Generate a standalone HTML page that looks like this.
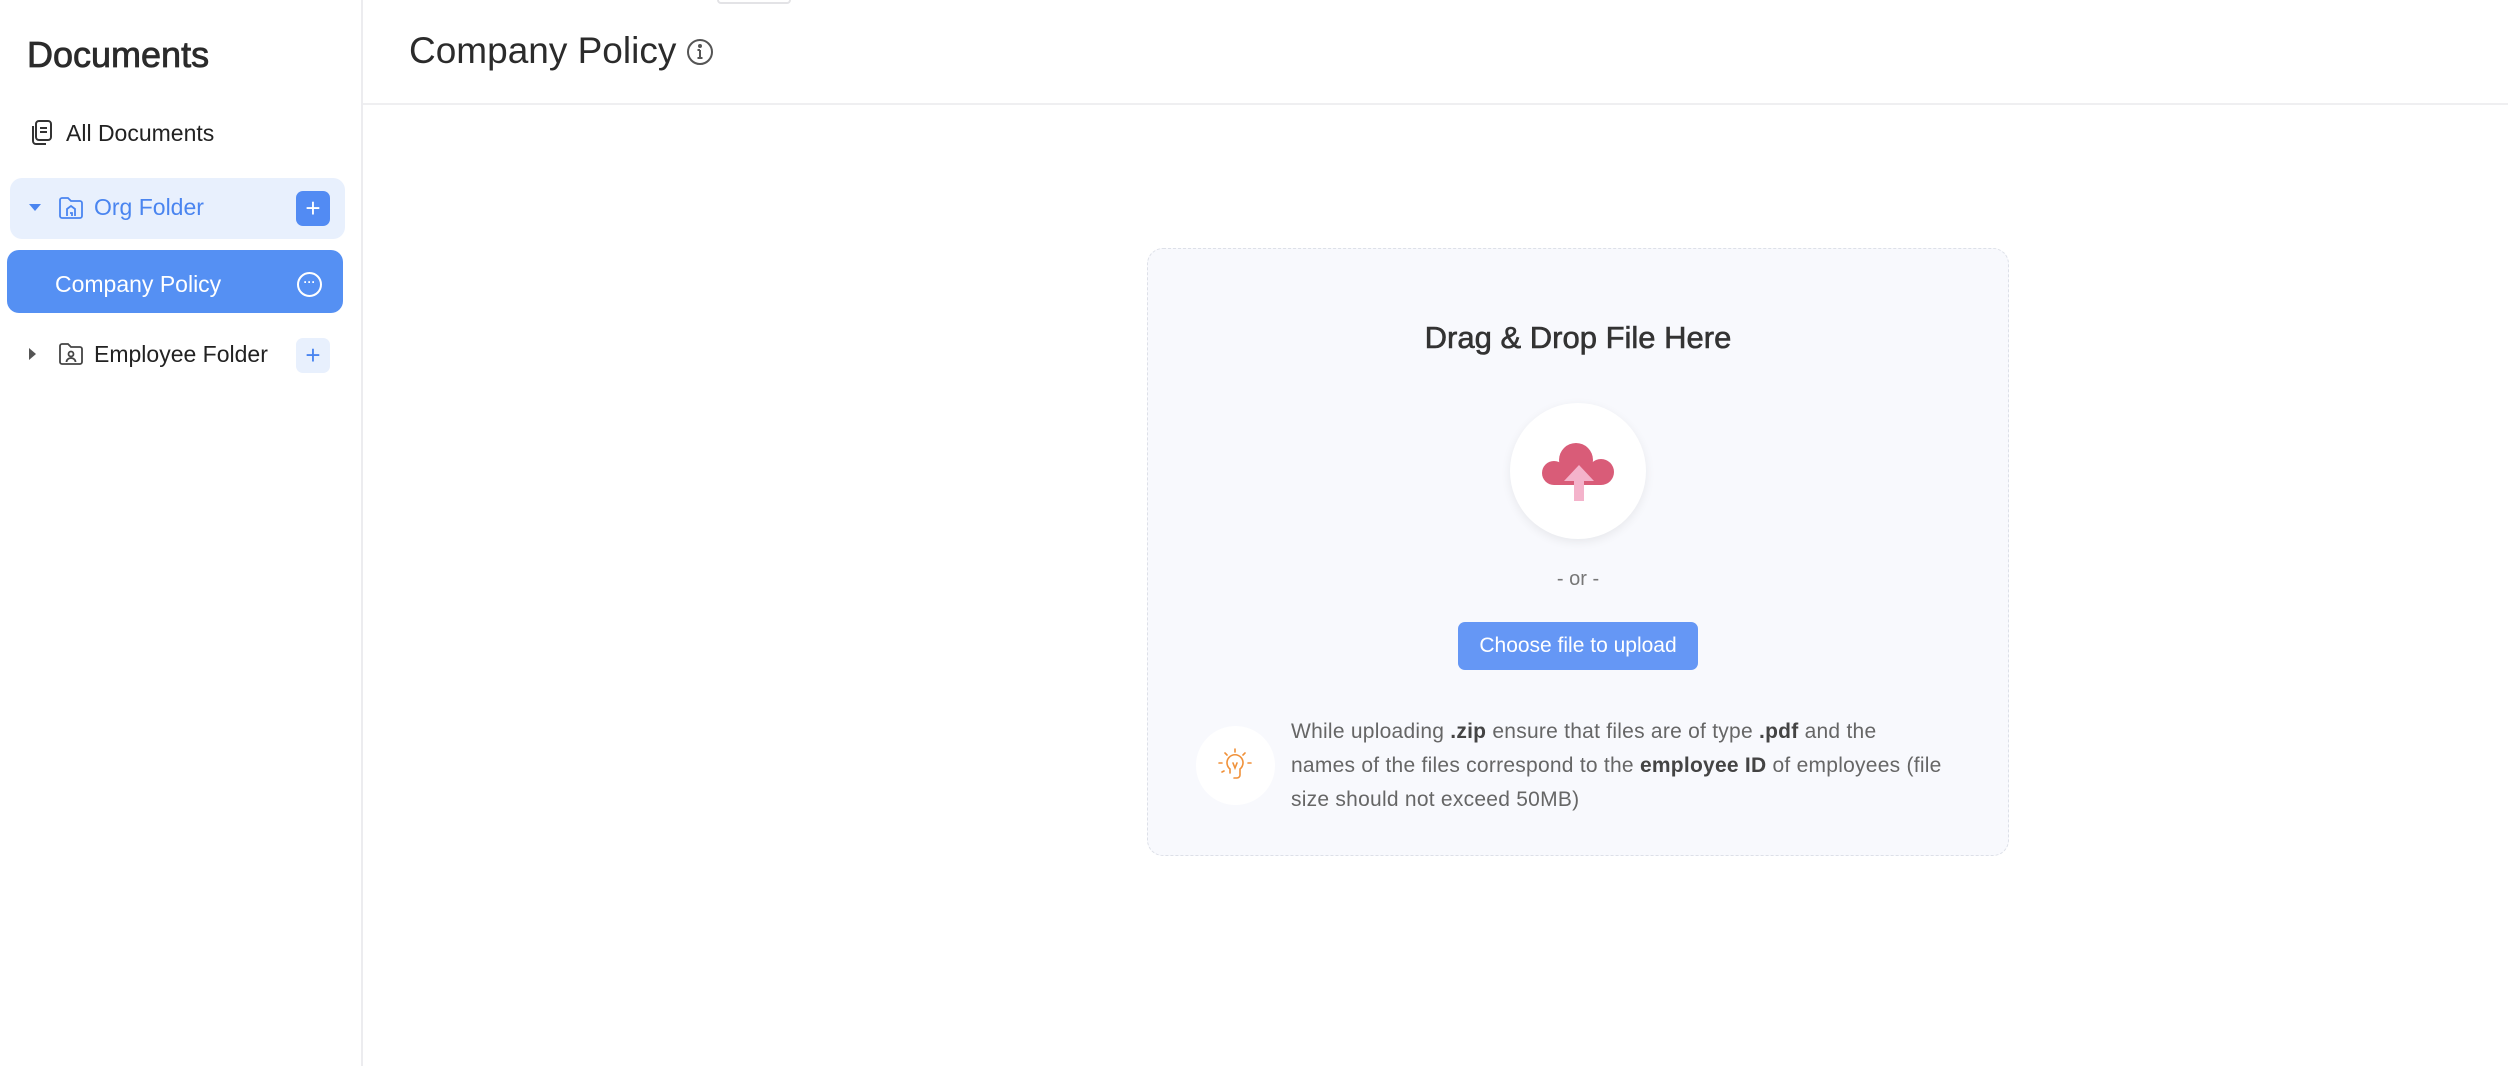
<!DOCTYPE html>
<html><head><meta charset="utf-8"><style>
*{box-sizing:border-box;margin:0;padding:0}
body{width:2508px;height:1066px;background:#fff;font-family:"Liberation Sans",sans-serif;position:relative;overflow:hidden;color:#222}
.abs{position:absolute}
</style></head><body>
<div class="abs" style="left:361px;top:0;width:2px;height:1066px;background:#ececef"></div>
<div class="abs" style="left:717px;top:-4px;width:74px;height:8px;border:2px solid #e3e3e6;border-radius:4px"></div>
<div class="abs" style="left:27px;top:34px;font-size:36px;color:#2b2b2b;-webkit-text-stroke:0.8px #2b2b2b">Documents</div>

<svg class="abs" style="left:29px;top:119px" width="26" height="28" viewBox="0 0 26 28" fill="none" stroke="#333" stroke-width="2"><rect x="7" y="2" width="15" height="19" rx="3"/><path d="M4 7v15a3 3 0 0 0 3 3h10"/><path d="M11 9h7M11 13h7"/></svg>
<div class="abs" style="left:66px;top:120px;font-size:23px;color:#222">All Documents</div>

<div class="abs" style="left:10px;top:178px;width:335px;height:61px;background:#e8f0fd;border-radius:12px"></div>
<svg class="abs" style="left:28px;top:203px" width="14" height="10"><path d="M1 1h12L7 8z" fill="#4a85f0"/></svg>
<svg class="abs" style="left:58px;top:196px" width="26" height="24" viewBox="0 0 26 24" fill="none" stroke="#4a85f0" stroke-width="1.8"><path d="M2 4a2 2 0 0 1 2-2h6l3 3h9a2 2 0 0 1 2 2v13a2 2 0 0 1-2 2H4a2 2 0 0 1-2-2z"/><path d="M9 20v-7l4-3 4 3v7M12 17h2v3"/></svg>
<div class="abs" style="left:94px;top:194px;font-size:23px;color:#4a85f0">Org Folder</div>
<div class="abs" style="left:296px;top:191px;width:34px;height:35px;background:#528bf3;border-radius:7px;color:#fff;font-size:26px;line-height:34px;text-align:center">+</div>

<div class="abs" style="left:7px;top:250px;width:336px;height:63px;background:#5590f3;border-radius:12px"></div>
<div class="abs" style="left:55px;top:271px;font-size:23px;color:#fff">Company Policy</div>
<div class="abs" style="left:297px;top:272px;width:25px;height:25px;border:2px solid #fff;border-radius:50%;color:#fff;font-size:12px;line-height:17px;text-align:center;font-weight:bold">···</div>

<svg class="abs" style="left:28px;top:347px" width="10" height="14"><path d="M1 1v12l7-6z" fill="#555"/></svg>
<svg class="abs" style="left:58px;top:342px" width="26" height="24" viewBox="0 0 26 24" fill="none" stroke="#444" stroke-width="1.8"><path d="M2 4a2 2 0 0 1 2-2h6l3 3h9a2 2 0 0 1 2 2v13a2 2 0 0 1-2 2H4a2 2 0 0 1-2-2z"/><circle cx="13" cy="12" r="2.5"/><path d="M8.5 20a4.5 4 0 0 1 9 0"/></svg>
<div class="abs" style="left:94px;top:341px;font-size:23px;color:#222">Employee Folder</div>
<div class="abs" style="left:296px;top:338px;width:34px;height:35px;background:#e8f0fd;border-radius:7px;color:#4a85f0;font-size:26px;line-height:34px;text-align:center">+</div>

<div class="abs" style="left:409px;top:30px;font-size:37px;color:#2b2b2b">Company Policy</div>
<svg class="abs" style="left:686px;top:38px" width="28" height="28" viewBox="0 0 28 28" fill="none" stroke="#555" stroke-width="2"><circle cx="14" cy="14" r="12"/><path d="M14 12v8M11.5 20h5M11.5 12h2.5"/><circle cx="14" cy="8" r="1" fill="#555"/></svg>
<div class="abs" style="left:363px;top:103px;width:2145px;height:2px;background:#efeff1"></div>

<div class="abs" style="left:1147px;top:248px;width:862px;height:608px;background:#f8f9fd;border:1.5px dashed #dde0e8;border-radius:16px"></div>
<div class="abs" style="left:1147px;top:320px;width:862px;text-align:center;font-size:31px;color:#333;-webkit-text-stroke:0.6px #333">Drag &amp; Drop File Here</div>
<div class="abs" style="left:1510px;top:403px;width:136px;height:136px;background:#fff;border-radius:50%;box-shadow:0 3px 10px rgba(0,0,0,.07)"></div>
<svg class="abs" style="left:1542px;top:443px" width="74" height="60" viewBox="0 0 74 60"><g fill="#d95c78"><circle cx="12" cy="30" r="12"/><circle cx="34" cy="17" r="17"/><circle cx="59" cy="29" r="13"/><rect x="12" y="24" width="47" height="18"/></g><path d="M37 22l15 16h-10v20h-10v-20h-10z" fill="#f4b3cb"/></svg>
<div class="abs" style="left:1147px;top:568px;width:862px;text-align:center;font-size:20px;color:#777">- or -</div>
<div class="abs" style="left:1458px;top:622px;width:240px;height:48px;background:#6597f5;border-radius:7px;color:#fff;font-size:21px;line-height:48px;text-align:center">Choose file to upload</div>
<div class="abs" style="left:1196px;top:726px;width:79px;height:79px;background:#fff;border-radius:50%"></div>
<svg class="abs" style="left:1215px;top:745px" width="40" height="40" viewBox="0 0 40 40" fill="none" stroke="#f0913a" stroke-width="1.6" stroke-linecap="round"><path d="M20 4v3M10 8l2 2M30 8l-2 2M4 18h3M33 18h3M7 27l2-1"/><path d="M15 28v-4a8 8 0 1 1 10 0v6a3 3 0 0 1-3 3h-3"/><path d="M18 18l2 5 2-5"/></svg>
<div class="abs" style="left:1291px;top:715px;white-space:nowrap;font-size:21px;line-height:34px;color:#666;letter-spacing:0.25px">While uploading <b style="color:#444">.zip</b> ensure that files are of type <b style="color:#444">.pdf</b> and the<br>names of the files correspond to the <b style="color:#444">employee ID</b> of employees (file<br>size should not exceed 50MB)</div>
</body></html>
